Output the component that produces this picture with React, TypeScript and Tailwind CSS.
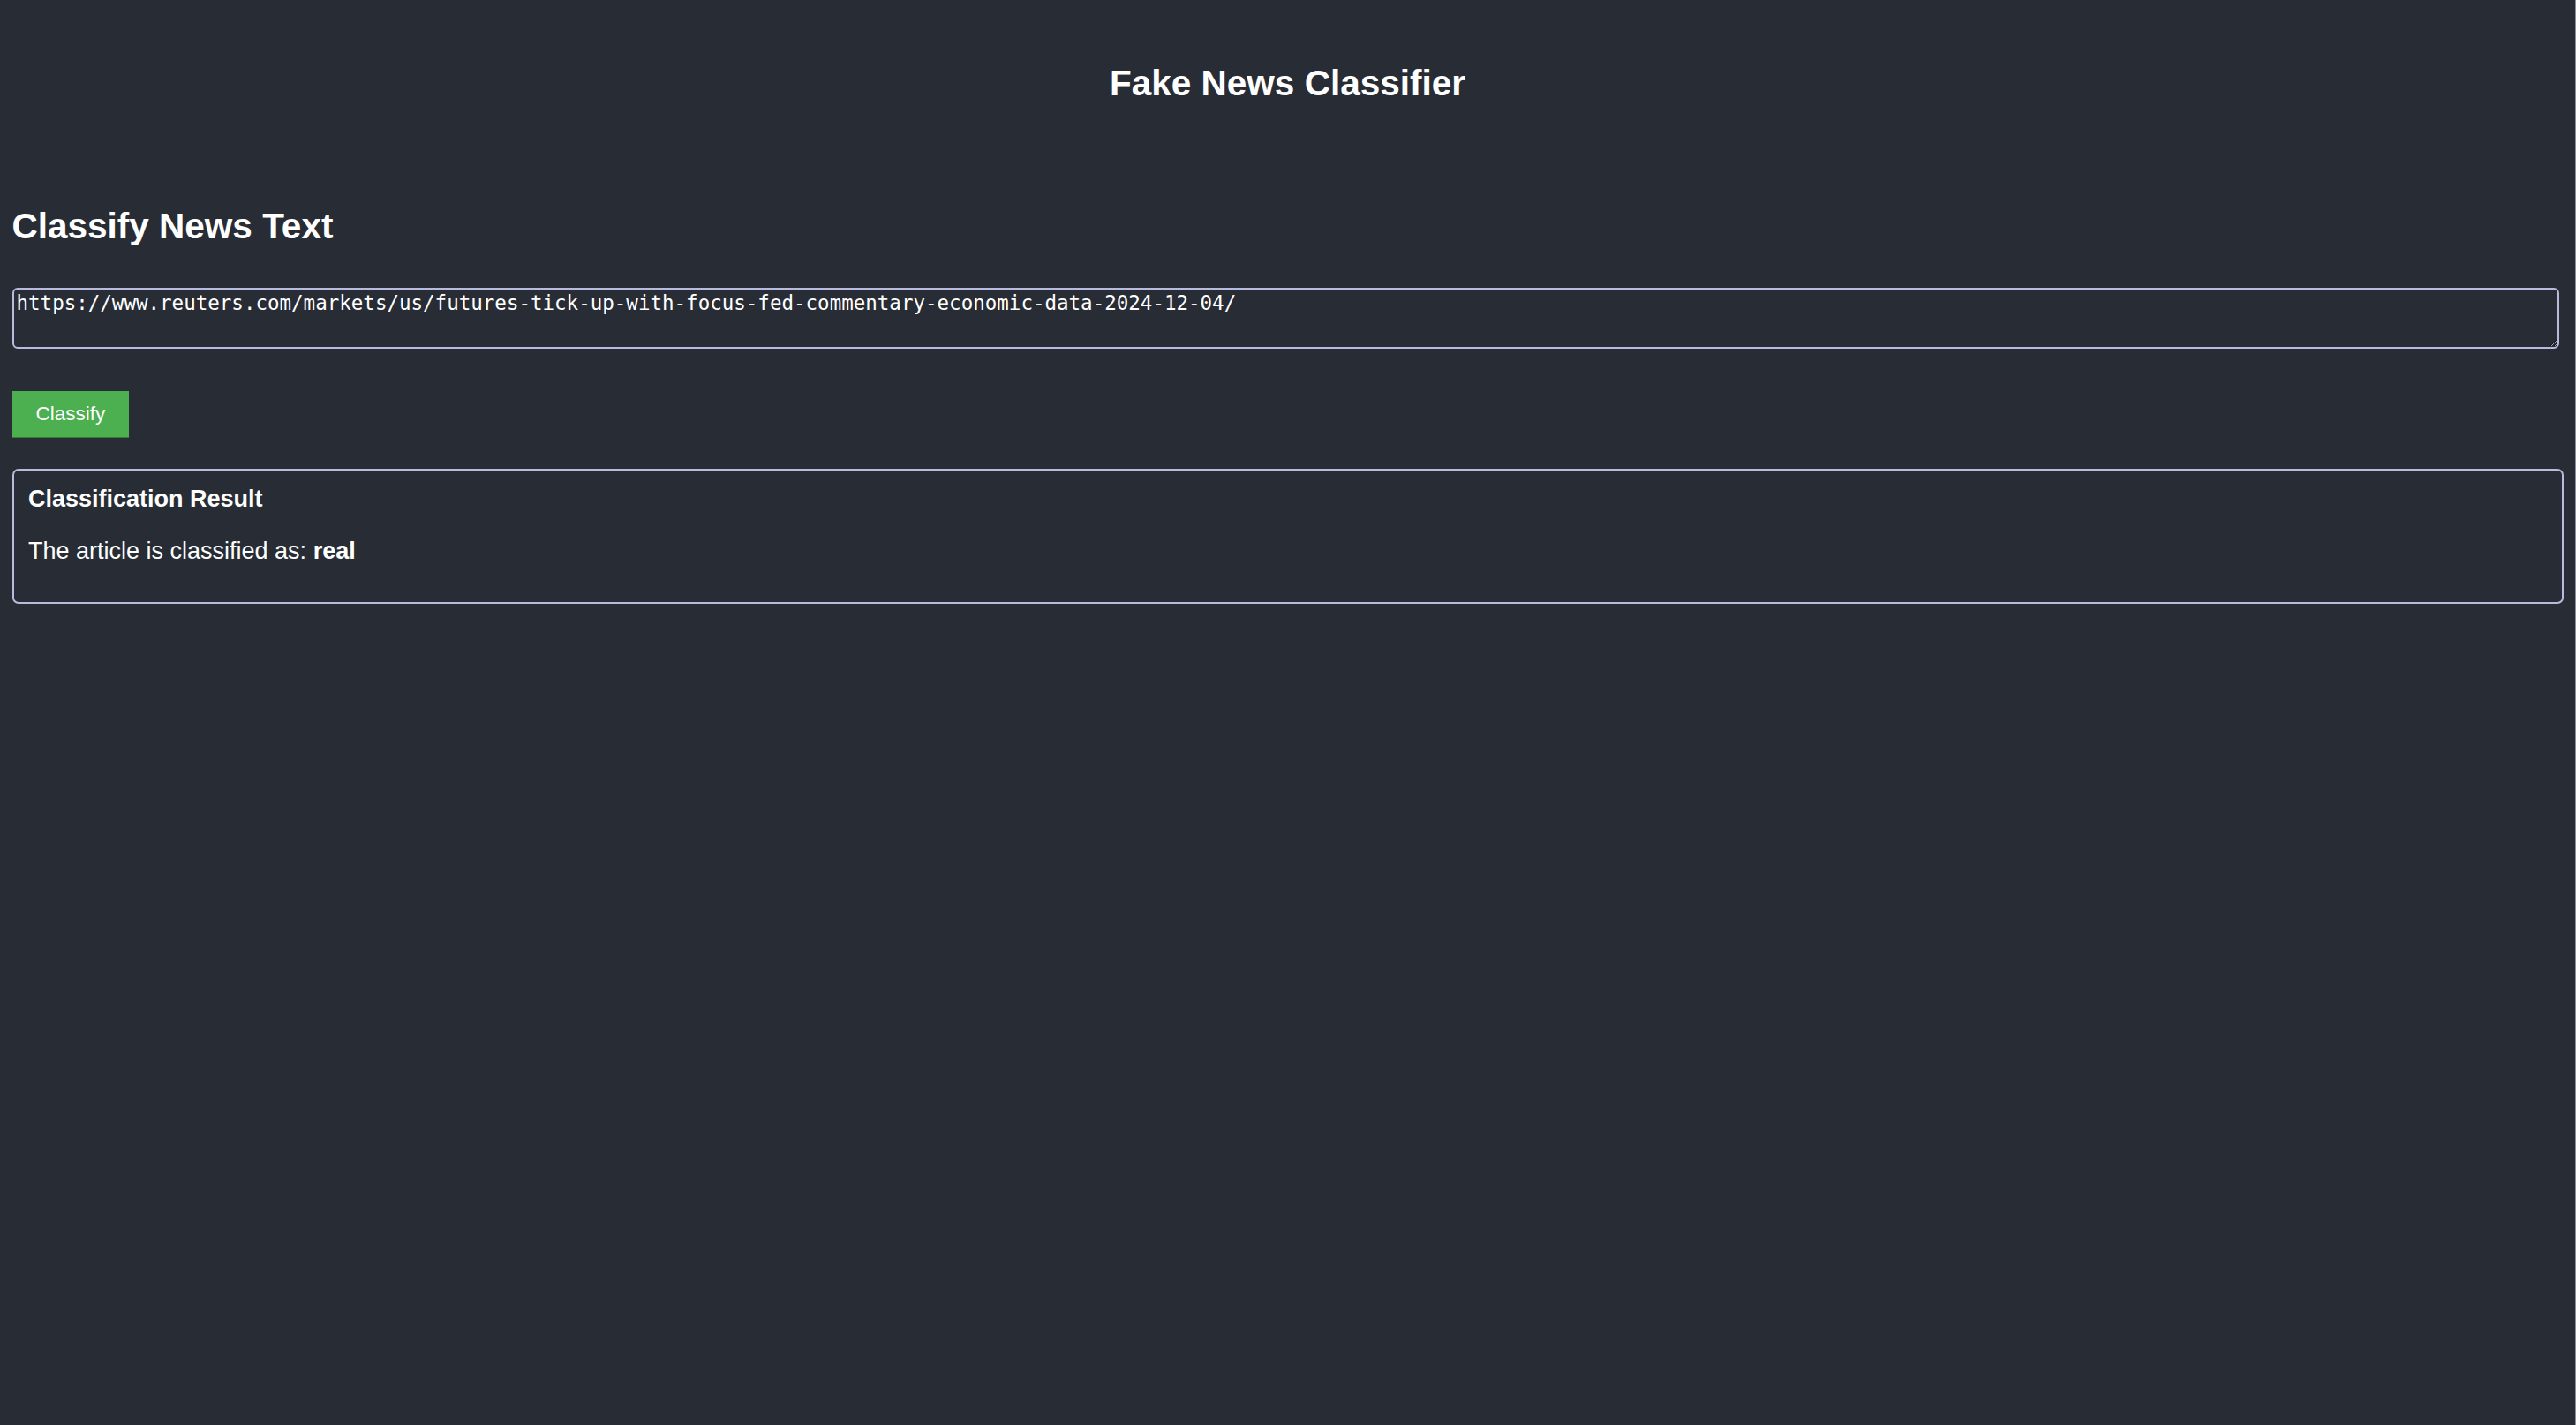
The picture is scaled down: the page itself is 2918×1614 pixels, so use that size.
export default function App() {
  return (
    <main className="min-h-screen bg-[#282c34] text-white font-['Liberation_Sans',Arial,sans-serif] border-r border-[#8e9099]">
      {/* Header */}
      <header className="pt-[70.7px] flex justify-center">
        <h1 className="text-[40.5px] leading-[46.5px] font-bold">Fake News Classifier</h1>
      </header>

      <div className="px-[13.5px]">
        <h2 className="mt-[116px] text-[40.5px] leading-[46.5px] font-bold">Classify News Text</h2>

        <textarea
          className="mt-[46px] block w-[calc(100%-4.5px)] h-[69px] bg-transparent text-white border-2 border-[#b8bade] rounded-[6px] px-[3px] py-[2.5px] text-[22.5px] leading-[26.2px] font-['DejaVu_Sans_Mono',monospace] outline-none"
          defaultValue="https://www.reuters.com/markets/us/futures-tick-up-with-focus-fed-commentary-economic-data-2024-12-04/"
        />

        <button className="mt-[48px] block bg-[#4caf50] border-b border-[#357a38] text-white text-[22.5px] leading-[26px] px-[27px] pt-[13.5px] pb-[12.5px]">
          Classify
        </button>

        <section className="mt-[35px] border-2 border-[#b8bade] rounded-[7px] px-[16.5px] pt-[17px] pb-[15px]">
          <h4 className="text-[27px] leading-[31px] font-bold">Classification Result</h4>
          <p className="mt-[28px] mb-[27px] text-[27px] leading-[31px]">
            The article is classified as: <strong className="font-bold">real</strong>
          </p>
        </section>
      </div>
    </main>
  );
}
